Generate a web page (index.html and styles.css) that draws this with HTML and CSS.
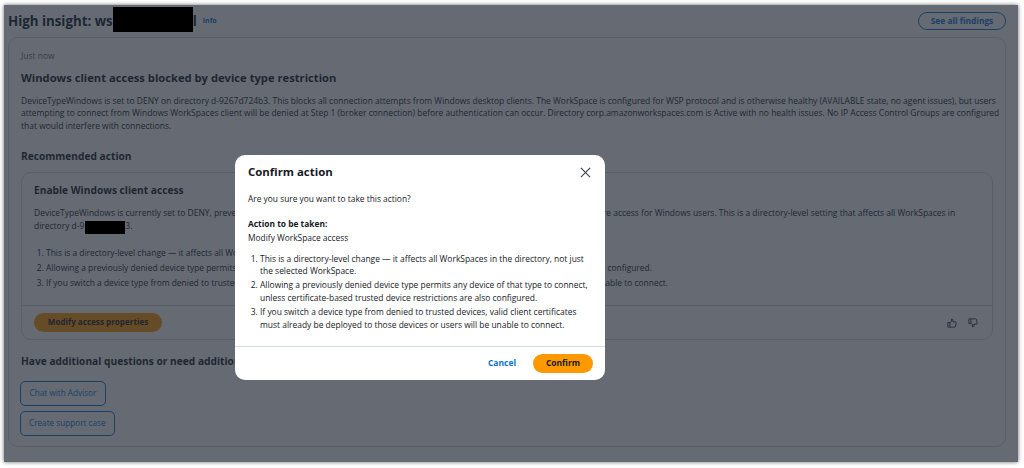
FILE: index.html
```html
<!DOCTYPE html>
<html lang="en">
<head>
    <meta charset="UTF-8">
    <meta name="viewport" content="width=device-width, initial-scale=1.0">
    <title>High insight</title>
    <link rel="stylesheet" href="styles.css">
</head>
<body>
    <div class="frame">
        <div class="page">
            <div class="page-header">
                <h1>High insight: ws<span class="redact redact-title"></span>l</h1>
                <a class="info-link">Info</a>
                <a class="pill-link">See all findings</a>
            </div>

            <div class="panel">
                <div class="timestamp">Just now</div>
                <h2>Windows client access blocked by device type restriction</h2>
                <p class="summary">DeviceTypeWindows is set to DENY on directory d-9267d724b3. This blocks all connection attempts from Windows desktop clients. The WorkSpace is configured for WSP protocol and is otherwise healthy (AVAILABLE state, no agent issues), but users attempting to connect from Windows WorkSpaces client will be denied at Step 1 (broker connection) before authentication can occur. Directory corp.amazonworkspaces.com is Active with no health issues. No IP Access Control Groups are configured that would interfere with connections.</p>

                <h3>Recommended action</h3>
                <div class="card">
                    <div class="card-body">
                        <h4>Enable Windows client access</h4>
                        <p class="card-text">DeviceTypeWindows is currently set to DENY, preventing all Windows clients from connecting to it. Changing this setting to ALLOW will now restore access for Windows users. This is a directory-level setting that affects all WorkSpaces in directory d-9<span class="redact redact-id"></span>3.</p>
                        <ol class="card-list">
                            <li>This is a directory-level change — it affects all WorkSpaces in the directory, not just the selected WorkSpace.</li>
                            <li>Allowing a previously denied device type permits any device of that type to connect, unless certificate-based trusted device restrictions are also configured.</li>
                            <li>If you switch a device type from denied to trusted devices, valid client certificates must already be deployed to those devices or users will be unable to connect.</li>
                        </ol>
                    </div>
                    <div class="card-footer">
                        <button class="btn-primary">Modify access properties</button>
                        <div class="feedback">
                            <svg class="thumb" viewBox="0 0 12 12"><path d="M1 5.500h2.500v5.500H1zM3.500 5.500 5.500 4V1.200c1 0 1.600.6 1.600 1.500V4.600h3.200c.5 0 .8.4.7.9l-.8 4.600c-.1.5-.4.9-1 .9H3.500"/></svg>
                            <svg class="thumb" viewBox="0 0 12 12"><path d="M1 1h2.500v5.500H1zM3.500 6.500 5.500 8v2.800c1 0 1.600-.6 1.600-1.500V7.400h3.200c.5 0 .8-.4.7-.9L10.200 1.900C10.100 1.400 9.800 1 9.200 1H3.500"/></svg>
                        </div>
                    </div>
                </div>

                <h3 class="more-title">Have additional questions or need additional help?</h3>
                <div class="support-actions">
                    <button class="btn-outline">Chat with Advisor</button>
                    <button class="btn-outline">Create support case</button>
                </div>
            </div>
        </div>

        <div class="scrim"></div>

        <div class="modal">
            <div class="modal-head">
                <h2>Confirm action</h2>
                <svg class="close-icon" viewBox="0 0 12 12"><path d="M1 1l10 10M11 1 1 11"/></svg>
            </div>
            <div class="modal-body">
                <p class="question">Are you sure you want to take this action?</p>
                <div class="action-label">Action to be taken:</div>
                <div class="action-name">Modify WorkSpace access</div>
                <ol class="modal-list">
                    <li>This is a directory-level change — it affects all WorkSpaces in the directory, not just the selected WorkSpace.</li>
                    <li>Allowing a previously denied device type permits any device of that type to connect, unless certificate-based trusted device restrictions are also configured.</li>
                    <li>If you switch a device type from denied to trusted devices, valid client certificates must already be deployed to those devices or users will be unable to connect.</li>
                </ol>
            </div>
            <div class="modal-foot">
                <a class="cancel-link">Cancel</a>
                <button class="btn-confirm">Confirm</button>
            </div>
        </div>
    </div>
</body>
</html>
```

FILE: styles.css
```css
html, body {
    height: 100%;
}
body {
    margin: 0;
    padding: 5px 6px 6px 4px;
    box-sizing: border-box;
    background-color: #fff;
    font-family: "Open Sans", "Noto Sans", sans-serif;
    font-size: 8.47px;
    line-height: 12.5px;
    color: #16191f;
    overflow: hidden;
}
.frame {
    position: relative;
    height: 100%;
    box-shadow: 0 0 4px rgba(0, 0, 0, 0.6);
}
.page {
    height: 100%;
    box-sizing: border-box;
    padding: 0 12px 0 4px;
    background-color: #fff;
}
.scrim {
    position: absolute;
    inset: 0;
    z-index: 1;
    background-color: rgba(35, 43, 55, 0.7);
}
/* the black bars sit on top of the dimmed page */
.redact {
    display: inline-block;
    position: relative;
    z-index: 2;
    background-color: #000;
}
.page-header {
    display: flex;
    align-items: center;
    height: 32px;
}
h1 {
    margin: 0;
    font-size: 13.3px;
    font-weight: 700;
    line-height: 25px;
    white-space: nowrap;
    color: #0f1b2a;
}
.redact-title {
    width: 80px;
    height: 25px;
    vertical-align: top;
    margin-top: -2px;
}
.info-link {
    margin-left: 6px;
    font-size: 7px;
    font-weight: 700;
    color: #0972d3;
}
.pill-link {
    margin-left: auto;
    width: 88px;
    height: 18px;
    box-sizing: border-box;
    border: 1px solid #0972d3;
    border-radius: 10px;
    text-align: center;
    font-size: 8.4px;
    font-weight: 700;
    line-height: 16px;
    color: #0972d3;
}
.panel {
    height: 410px;
    box-sizing: border-box;
    padding: 12px 12px 0;
    border: 1px solid #d5dbdb;
    border-radius: 10px;
}
.timestamp {
    color: #5f6b7a;
}
.panel h2 {
    margin: 7px 0 9px;
    font-size: 11.2px;
    font-weight: 700;
    line-height: 16px;
}
.summary {
    margin: 0 -8px 0 0;
}
h3 {
    margin: 17px 0 9px;
    font-size: 10.2px;
    font-weight: 700;
    line-height: 14px;
}
.card {
    border: 1px solid #d5dbdb;
    border-radius: 10px;
}
.card-body {
    padding: 10px 12px 0;
    height: 133px;
    box-sizing: border-box;
    border-bottom: 1px solid #d5dbdb;
}
h4 {
    margin: 0 0 10px;
    font-size: 10.2px;
    font-weight: 700;
    line-height: 14px;
}
.card-text {
    margin: 0 0 13px;
    padding-right: 20px;
}
.card-list {
    margin: 0;
    padding-left: 12px;
    font-size: 8.44px;
}
.card-list li {
    margin-bottom: 2.5px;
}
.card-footer {
    display: flex;
    align-items: center;
    justify-content: space-between;
    height: 33px;
    padding: 0 12px;
}
.btn-primary {
    width: 128px;
    height: 19px;
    padding: 0;
    border: none;
    border-radius: 10px;
    background-color: #ff9900;
    font: inherit;
    font-size: 8.1px;
    font-weight: 700;
    color: #16191f;
}
.feedback {
    display: flex;
    gap: 11px;
    padding-right: 2px;
}
.thumb {
    width: 10px;
    height: 10px;
    fill: none;
    stroke: #16191f;
    stroke-width: 1;
}
.more-title {
    margin: 14px 0 13px;
}
.support-actions {
    display: flex;
    flex-direction: column;
    align-items: flex-start;
    gap: 5px;
    margin-left: -1px;
}
.btn-outline {
    height: 25px;
    min-width: 86px;
    padding: 0 8px;
    border: 1px solid #0972d3;
    border-radius: 5px;
    background: none;
    font: inherit;
    font-size: 8.2px;
    color: #0972d3;
}
.redact-id {
    width: 40px;
    height: 13px;
    margin: 1px 0 0 1px;
    vertical-align: top;
}
.modal {
    position: absolute;
    z-index: 3;
    left: 231px;
    top: 150px;
    width: 370px;
    height: 225px;
    box-sizing: border-box;
    display: flex;
    flex-direction: column;
    border-radius: 10px;
    background-color: #fff;
}
.modal-head {
    display: flex;
    align-items: center;
    justify-content: space-between;
    padding: 8px 14px 0 13px;
}
.modal-head h2 {
    margin: 0;
    font-size: 11.4px;
    font-weight: 700;
    line-height: 18px;
}
.close-icon {
    width: 11px;
    height: 11px;
    fill: none;
    stroke: #414750;
    stroke-width: 1.3;
}
.modal-body {
    flex: 1;
    padding: 12px 13px 0;
}
.question {
    margin: 0 0 12px;
    font-size: 8.4px;
}
.action-label {
    font-weight: 700;
    font-size: 8.4px;
    margin-bottom: 2px;
}
.action-name {
    font-size: 8.4px;
}
.modal-list {
    margin: 8px 0 0;
    padding-left: 12px;
    font-size: 8.45px;
    line-height: 12.7px;
}
.modal-list li {
    margin-bottom: 1.5px;
}
.modal-foot {
    display: flex;
    align-items: center;
    justify-content: flex-end;
    gap: 17px;
    height: 33px;
    padding: 0 12px;
    border-top: 1px solid #d5dbdb;
}
.cancel-link {
    font-weight: 700;
    color: #0972d3;
}
.btn-confirm {
    width: 60px;
    height: 19px;
    padding: 0;
    border: none;
    border-radius: 10px;
    background-color: #ff9900;
    font: inherit;
    font-weight: 700;
    color: #16191f;
}
```
